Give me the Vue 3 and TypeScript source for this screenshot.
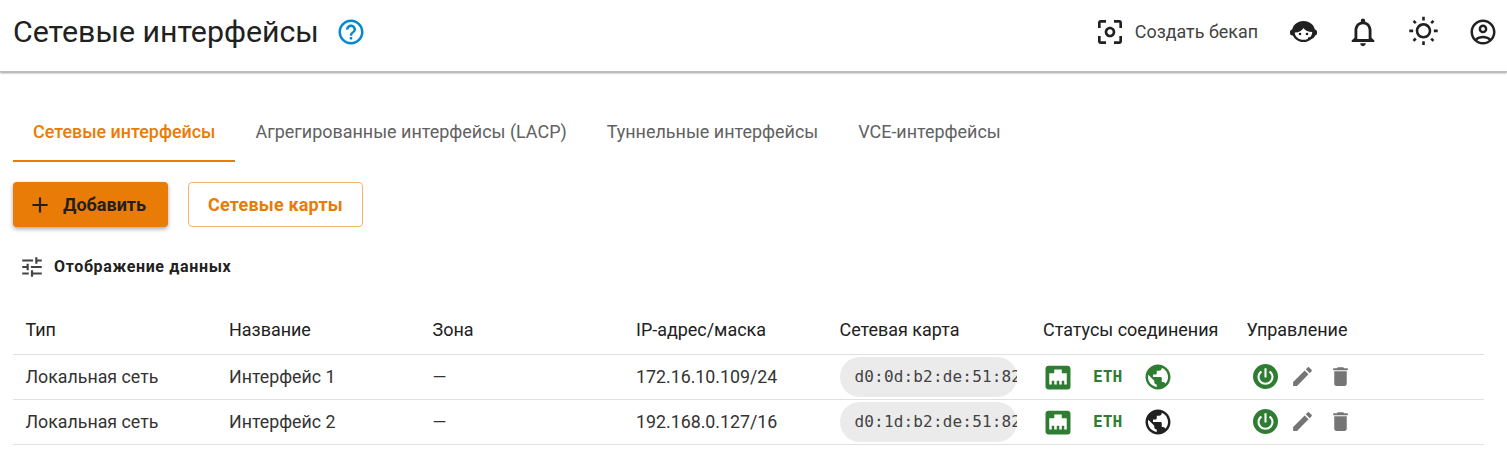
<template>
  <div class="page">
    <header class="topbar">
      <div class="title-wrap">
        <h1>Сетевые интерфейсы</h1>
        <svg class="help" viewBox="0 0 24 24"><path :d="icons.help" /></svg>
      </div>
      <div class="actions">
        <button class="backup">
          <svg viewBox="0 0 24 24"><path :d="icons.focus" /></svg>
          <span>Создать бекап</span>
        </button>
        <span class="top-btn">
          <svg class="agent" viewBox="0 0 27 21">
            <ellipse cx="13.5" cy="10.5" rx="11.5" ry="10.5" />
            <rect x="0" y="8.5" width="5" height="6" rx="2.5" />
            <rect x="22" y="8.5" width="5" height="6" rx="2.5" />
            <path class="face" d="M4.8 11.5C9 11.5 12 9.5 13.5 7 15 9.5 18.5 11 22.2 11 22.2 15.5 18.5 18.8 13.5 18.8 9 18.8 4.8 16 4.8 11.5z" />
            <circle cx="10" cy="13" r="1.3" />
            <circle cx="17" cy="13" r="1.3" />
            <path class="mic" d="M24.5 13.5c-.5 2.8-3 3.8-6.5 3.8" />
          </svg>
        </span>
        <span class="top-btn"><svg class="bell" viewBox="0 0 24 24"><path :d="icons.bell" /></svg></span>
        <span class="top-btn"><svg class="sun" viewBox="0 0 24 24"><path :d="icons.sun" /></svg></span>
        <span class="top-btn"><svg class="account" viewBox="0 0 24 24"><path :d="icons.account" /></svg></span>
      </div>
    </header>

    <main class="content">
      <nav class="tabs">
        <a
          v-for="(tab, i) in tabs"
          :key="tab"
          class="tab"
          :class="{ active: i === 0 }"
        >{{ tab }}</a>
      </nav>

      <div class="buttons">
        <button class="btn-add">
          <svg viewBox="0 0 24 24"><path :d="icons.plus" /></svg>
          Добавить
        </button>
        <button class="btn-outline">Сетевые карты</button>
      </div>

      <div class="display-opts">
        <svg viewBox="0 0 24 24"><path :d="icons.tune" /></svg>
        <span>Отображение данных</span>
      </div>

      <div class="table">
        <div class="row head">
          <div v-for="col in columns" :key="col">{{ col }}</div>
        </div>
        <div v-for="row in rows" :key="row.name" class="row">
          <div>{{ row.type }}</div>
          <div>{{ row.name }}</div>
          <div>{{ row.zone }}</div>
          <div>{{ row.ip }}</div>
          <div><span class="mac"><span class="mac-text">{{ row.mac }}</span></span></div>
          <div class="statuses">
            <svg class="st-icon on" viewBox="0 0 24 24"><path :d="icons.ethernet" /></svg>
            <span class="eth">ETH</span>
            <svg class="st-icon" :class="{ on: row.online }" viewBox="0 0 24 24"><path :d="icons.globe" /></svg>
          </div>
          <div class="manage">
            <svg class="power" viewBox="0 0 24 24">
              <circle cx="12" cy="12" r="12" fill="#2e7d32" />
              <path :d="icons.power" fill="#fff" />
            </svg>
            <svg class="tool" viewBox="0 0 24 24"><path :d="icons.edit" /></svg>
            <svg class="tool" viewBox="0 0 24 24"><path :d="icons.trash" /></svg>
          </div>
        </div>
      </div>
    </main>
  </div>
</template>

<script setup lang="ts">
const icons = {
  help: 'M11 18h2v-2h-2v2zm1-16C6.48 2 2 6.48 2 12s4.48 10 10 10 10-4.48 10-10S17.52 2 12 2zm0 18c-4.41 0-8-3.59-8-8s3.59-8 8-8 8 3.59 8 8-3.59 8-8 8zm0-14c-2.21 0-4 1.79-4 4h2c0-1.1.9-2 2-2s2 .9 2 2c0 2-3 1.75-3 5h2c0-2.25 3-2.5 3-5 0-2.21-1.79-4-4-4z',
  focus: 'M5 15H3v4c0 1.1.9 2 2 2h4v-2H5v-4zM5 5h4V3H5c-1.1 0-2 .9-2 2v4h2V5zm14-2h-4v2h4v4h2V5c0-1.1-.9-2-2-2zm0 16h-4v2h4c1.1 0 2-.9 2-2v-4h-2v4zM12 8c-2.21 0-4 1.79-4 4s1.79 4 4 4 4-1.79 4-4-1.79-4-4-4zm0 6c-1.1 0-2-.9-2-2s.9-2 2-2 2 .9 2 2-.9 2-2 2z',
  bell: 'M12 22c1.1 0 2-.9 2-2h-4c0 1.1.9 2 2 2zm6-6v-5c0-3.07-1.63-5.64-4.5-6.32V4c0-.83-.67-1.5-1.5-1.5s-1.5.67-1.5 1.5v.68C7.64 5.36 6 7.92 6 11v5l-2 2v1h16v-1l-2-2zm-2 1H8v-6c0-2.48 1.51-4.5 4-4.5s4 2.02 4 4.5v6z',
  sun: 'M6.76 4.84l-1.8-1.79-1.41 1.41 1.79 1.79zM1 10.5h3v2H1zM11 .55h2V3.5h-2zm8.04 2.495l1.408 1.407-1.79 1.79-1.407-1.408zm-1.8 15.115l1.79 1.8 1.41-1.41-1.8-1.79zM20 10.5h3v2h-3zm-8-5c-3.31 0-6 2.69-6 6s2.69 6 6 6 6-2.69 6-6-2.69-6-6-6zm0 10c-2.21 0-4-1.79-4-4s1.79-4 4-4 4 1.79 4 4-1.79 4-4 4zm-1 4h2v2.95h-2zm-7.45-.96l1.41 1.41 1.79-1.8-1.41-1.41z',
  account: 'M12 2C6.48 2 2 6.48 2 12s4.48 10 10 10 10-4.48 10-10S17.52 2 12 2zM7.35 18.5C8.66 17.56 10.26 17 12 17s3.34.56 4.65 1.5c-1.31.94-2.91 1.5-4.65 1.5s-3.34-.56-4.65-1.5zm10.79-1.38C16.45 15.8 14.32 15 12 15s-4.45.8-6.14 2.12C4.7 15.73 4 13.95 4 12c0-4.42 3.58-8 8-8s8 3.58 8 8c0 1.95-.7 3.73-1.86 5.12zM12 6c-1.93 0-3.5 1.57-3.5 3.5S10.07 13 12 13s3.5-1.57 3.5-3.5S13.93 6 12 6zm0 5c-.83 0-1.5-.67-1.5-1.5S11.17 8 12 8s1.5.67 1.5 1.5S12.83 11 12 11z',
  plus: 'M19 13h-6v6h-2v-6H5v-2h6V5h2v6h6v2z',
  tune: 'M3 17v2h6v-2H3zM3 5v2h10V5H3zm10 16v-2h8v-2h-8v-2h-2v6h2zM7 9v2H3v2h4v2h2V9H7zm14 4v-2H11v2h10zm-6-4h2V7h4V5h-4V3h-2v6z',
  ethernet: 'M7 15h2v3h2v-3h2v3h2v-3h2v3h2V9h-4V6H9v3H5v9h2v-3zM4.38 3h15.25C20.94 3 22 4.06 22 5.38v14.25A2.37 2.37 0 0 1 19.63 22H4.38C3.06 22 2 20.94 2 19.63V5.38C2 4.06 3.06 3 4.38 3z',
  globe: 'M12 2C6.48 2 2 6.48 2 12s4.48 10 10 10 10-4.48 10-10S17.52 2 12 2zm-1 17.93c-3.95-.49-7-3.85-7-7.93 0-.62.08-1.21.21-1.79L9 15v1c0 1.1.9 2 2 2v1.93zm6.9-2.54c-.26-.81-1-1.39-1.9-1.39h-1v-3c0-.55-.45-1-1-1H8v-2h2c.55 0 1-.45 1-1V7h2c1.1 0 2-.9 2-2v-.41c2.93 1.19 5 4.06 5 7.41 0 2.08-.8 3.97-2.1 5.39z',
  power: 'M13 4h-2v9h2V4zm3.6 2.4-1.4 1.4C16.8 8.9 17.7 10.7 17.7 12.3c0 3.2-2.5 5.7-5.7 5.7s-5.7-2.5-5.7-5.7c0-1.6.9-3.4 2.5-4.5L7.4 6.4C5.4 7.8 4.3 10 4.3 12.3c0 4.3 3.4 7.7 7.7 7.7s7.7-3.4 7.7-7.7c0-2.3-1.1-4.5-3.1-5.9z',
  edit: 'M3 17.25V21h3.75L17.81 9.94l-3.75-3.75L3 17.25zM20.71 7.04c.39-.39.39-1.02 0-1.41l-2.34-2.34c-.39-.39-1.02-.39-1.41 0l-1.83 1.83 3.75 3.75 1.83-1.83z',
  trash: 'M6 19c0 1.1.9 2 2 2h8c1.1 0 2-.9 2-2V7H6v12zM19 4h-3.5l-1-1h-5l-1 1H5v2h14V4z',
}

const tabs = [
  'Сетевые интерфейсы',
  'Агрегированные интерфейсы (LACP)',
  'Туннельные интерфейсы',
  'VCE-интерфейсы',
]

const columns = ['Тип', 'Название', 'Зона', 'IP-адрес/маска', 'Сетевая карта', 'Статусы соединения', 'Управление']

const rows = [
  { type: 'Локальная сеть', name: 'Интерфейс 1', zone: '—', ip: '172.16.10.109/24', mac: 'd0:0d:b2:de:51:82', online: true },
  { type: 'Локальная сеть', name: 'Интерфейс 2', zone: '—', ip: '192.168.0.127/16', mac: 'd0:1d:b2:de:51:82', online: false },
]
</script>

<style>
body {
  background: #fff;
  overflow: hidden;
}
</style>

<style scoped>
.page {
  font-family: Roboto, "Liberation Sans", sans-serif;
  color: #212121;
}
.topbar {
  height: 72px;
  display: flex;
  align-items: center;
  justify-content: space-between;
  padding: 0 8px 8px 13px;
  box-sizing: border-box;
  box-shadow: 0 1px 2px rgba(0, 0, 0, 0.4);
  border-bottom: 1px solid #bdbdbd;
  margin-bottom: 1px;
}
.title-wrap {
  display: flex;
  align-items: center;
  gap: 17px;
}
h1 {
  margin: 0;
  font-size: 30.3px;
  font-weight: 400;
  line-height: 36px;
}
.help {
  width: 30px;
  height: 30px;
  fill: #0288d1;
}
.actions {
  display: flex;
  align-items: center;
  gap: 28px;
}
.backup {
  display: flex;
  align-items: center;
  gap: 9px;
  margin-right: 1px;
  background: none;
  border: 0;
  padding: 0;
  font: 400 17.9px Roboto, sans-serif;
  color: #424242;
}
.backup svg {
  width: 32px;
  height: 32px;
  fill: #212121;
}
.top-btn {
  width: 32px;
  height: 32px;
  display: flex;
  align-items: center;
  justify-content: center;
}
.top-btn svg {
  flex: none;
  fill: #212121;
}
.agent {
  width: 27px;
  height: 21px;
}
.face {
  fill: #fff;
}
.mic {
  fill: none;
  stroke: #212121;
  stroke-width: 1.8;
}
.bell {
  width: 34px;
  height: 34px;
}
.sun {
  width: 31px;
  height: 31px;
}
.account {
  width: 30px;
  height: 30px;
}
.content {
  padding: 0 23px 0 13px;
}
.tabs {
  display: flex;
  margin-top: 37px;
}
.tab {
  padding: 0 20px;
  height: 53px;
  line-height: 46px;
  font-size: 17.95px;
  font-weight: 400;
  color: #616161;
  box-sizing: border-box;
  border-bottom: 2px solid transparent;
}
.tab.active {
  font-weight: 500;
  font-size: 17.9px;
  color: #e97c07;
  border-bottom-color: #e97c07;
}
.buttons {
  display: flex;
  gap: 20px;
  margin-top: 20px;
}
.btn-add,
.btn-outline {
  height: 45px;
  border-radius: 4px;
  font: 700 18px Roboto, sans-serif;
  box-sizing: border-box;
}
.btn-add {
  width: 155px;
  display: flex;
  align-items: center;
  gap: 10px;
  padding: 0 0 0 14px;
  background: #e97c07;
  color: #212121;
  border: 0;
  box-shadow: 0 2px 4px rgba(0, 0, 0, 0.35);
}
.btn-add svg {
  width: 26px;
  height: 26px;
  fill: #212121;
}
.btn-outline {
  width: 175px;
  padding: 0;
  letter-spacing: 0.18px;
  background: #fff;
  color: #e97c07;
  border: 1px solid #f4b56f;
}
.display-opts {
  display: flex;
  align-items: center;
  gap: 9px;
  margin-top: 27px;
  padding-left: 6px;
  font-size: 16px;
  font-weight: 700;
  letter-spacing: 0.65px;
}
.display-opts span {
  padding-bottom: 2px;
}
.display-opts svg {
  width: 26px;
  height: 26px;
  fill: #424242;
}
.table {
  margin-top: 28px;
}
.row {
  display: grid;
  grid-template-columns: repeat(7, 203.5px);
  align-items: center;
  height: 45px;
  padding: 0 0 1px 12.5px;
  font-size: 17.8px;
  color: #333;
  border-bottom: 1px solid #e0e0e0;
  box-sizing: border-box;
}
.row.head {
  height: 47px;
  padding-bottom: 4px;
  font-size: 17.95px;
  color: #212121;
}
.mac {
  display: inline-flex;
  align-items: center;
  width: 177px;
  height: 40px;
  padding-left: 15px;
  box-sizing: border-box;
  border-radius: 20px;
  background: #ebebeb;
  vertical-align: middle;
}
.mac-text {
  font-family: "DejaVu Sans Mono", monospace;
  font-size: 16px;
  letter-spacing: 0.17px;
  color: #424242;
  white-space: nowrap;
  overflow: hidden;
  width: 162px;
}
.statuses,
.manage {
  display: flex;
  align-items: center;
}
.statuses {
  gap: 20px;
}
.st-icon {
  width: 30px;
  height: 30px;
  fill: #212121;
}
.st-icon.on {
  fill: #2e7d32;
}
.eth {
  width: 30px;
  font-family: "DejaVu Sans Mono", monospace;
  font-size: 16.3px;
  font-weight: 700;
  color: #2e7d32;
}
.manage {
  gap: 12.5px;
  padding-left: 6px;
}
.power,
.tool {
  width: 25px;
  height: 25px;
}
.tool {
  fill: #757575;
}
</style>
